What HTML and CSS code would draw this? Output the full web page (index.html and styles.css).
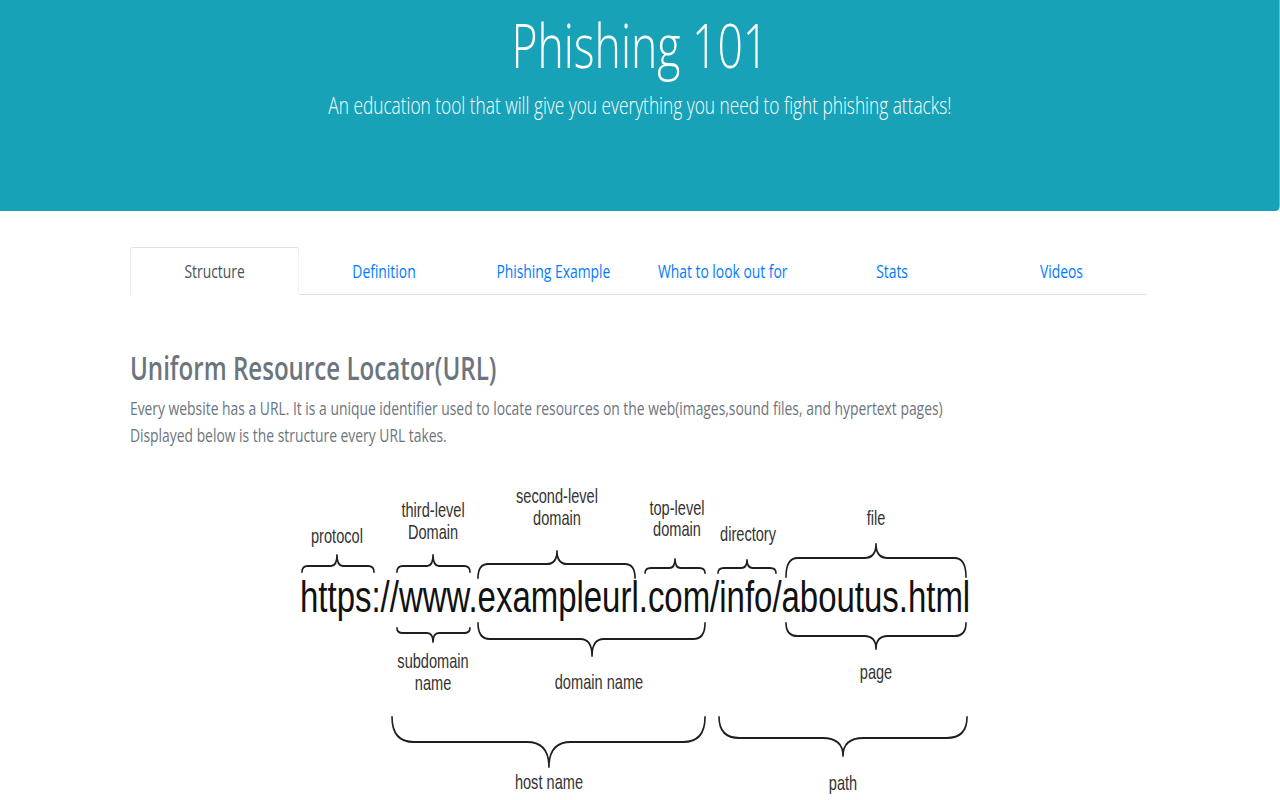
FILE: index.html
```html
<!DOCTYPE html>
<html lang="en">
<head>
<meta charset="utf-8">
<title>Phishing 101</title>
<link rel="stylesheet" href="styles.css">
</head>
<body>
<div class="frame">
<div class="page">
  <header class="hero">
    <h1 class="hero-title">Phishing 101</h1>
    <p class="hero-lead">An education tool that will give you everything you need to fight phishing attacks!</p>
  </header>
  <main class="container">
    <ul class="tabs">
      <li class="tab"><a class="tab-link active" href="#">Structure</a></li>
      <li class="tab"><a class="tab-link" href="#">Definition</a></li>
      <li class="tab"><a class="tab-link" href="#">Phishing Example</a></li>
      <li class="tab"><a class="tab-link" href="#">What to look out for</a></li>
      <li class="tab"><a class="tab-link" href="#">Stats</a></li>
      <li class="tab"><a class="tab-link" href="#">Videos</a></li>
    </ul>
    <section class="section">
      <h2 class="section-title">Uniform Resource Locator(URL)</h2>
      <p class="section-text">Every website has a URL. It is a unique identifier used to locate resources on the web(images,sound files, and hypertext pages)<br>Displayed below is the structure every URL takes.</p>
    </section>
  </main>
  <figure class="diagram">
    <svg class="diagram-svg" width="1753" height="330" viewBox="0 0 1753 330" xmlns="http://www.w3.org/2000/svg">
      <g class="braces">
        <path d="M413.7 101 Q413.7 95 421.7 95 L453.6 95 Q461.6 95 461.6 84 Q461.6 95 469.6 95 L504.3 95 Q512.3 95 512.3 101"/>
        <path d="M543.8 101 Q543.8 95 551.8 95 L585.2 95 Q593.2 95 593.2 84 Q593.2 95 601.2 95 L635.8 95 Q643.8 95 643.8 101"/>
        <path d="M654.8 107 Q654.8 93 668.8 93 L749 93 Q763 93 763 80 Q763 93 777 93 L855.9 93 Q869.9 93 869.9 107"/>
        <path d="M883.6 102 Q883.6 97 891.6 97 L916.7 97 Q924.7 97 924.7 88 Q924.7 97 932.7 97 L957.8 97 Q965.8 97 965.8 102"/>
        <path d="M983.6 102 Q983.6 97 991.6 97 L1015.3 97 Q1023.3 97 1023.3 89 Q1023.3 97 1031.3 97 L1055 97 Q1063 97 1063 102"/>
        <path d="M1076.7 106 Q1076.7 87 1092.7 87 L1184 87 Q1200 87 1200 73 Q1200 87 1216 87 L1307.3 87 Q1323.3 87 1323.3 106"/>
        <path d="M543.8 157 Q543.8 162 551.8 162 L585.2 162 Q593.2 162 593.2 171 Q593.2 162 601.2 162 L635.8 162 Q643.8 162 643.8 157"/>
        <path d="M654.8 152 Q654.8 168 670.8 168 L795 168 Q811 168 811 185 Q811 168 827 168 L949.8 168 Q965.8 168 965.8 152"/>
        <path d="M1076.7 152 Q1076.7 165 1092.7 165 L1184 165 Q1200 165 1200 178 Q1200 165 1216 165 L1307.3 165 Q1323.3 165 1323.3 152"/>
        <path d="M537 246 Q537 271 567 271 L722 271 Q752 271 752 296 Q752 271 782 271 L935.8 271 Q965.8 271 965.8 246"/>
        <path d="M985 246 Q985 267 1013 267 L1126.8 267 Q1154.8 267 1154.8 285 Q1154.8 267 1182.8 267 L1296.7 267 Q1324.7 267 1324.7 246"/>
      </g>
      <g class="labels">
        <text x="461.6" y="72">protocol</text>
        <text x="593.2" y="46">third-level</text>
        <text x="593.2" y="68">Domain</text>
        <text x="763" y="32">second-level</text>
        <text x="763" y="54">domain</text>
        <text x="927.4" y="44">top-level</text>
        <text x="927.4" y="65">domain</text>
        <text x="1024.7" y="70">directory</text>
        <text x="1200" y="54">file</text>
        <text x="593.2" y="197">subdomain</text>
        <text x="593.2" y="219">name</text>
        <text x="820.5" y="218">domain name</text>
        <text x="1200" y="208">page</text>
        <text x="752" y="318">host name</text>
        <text x="1154.8" y="319">path</text>
      </g>
      <text class="url" x="411" y="141" textLength="918" lengthAdjust="spacingAndGlyphs">https://www.exampleurl.com/info/aboutus.html</text>
    </svg>
  </figure>
</div>
</div>
</body>
</html>
```

FILE: styles.css
```css
html {
  overflow: hidden;
}

body {
  margin: 0;
  background: #ffffff;
  font-family: "Open Sans", "Noto Sans", sans-serif;
  color: #212529;
}

.frame {
  width: 1280px;
  height: 800px;
  overflow: hidden;
}

.page {
  width: 1753px;
  transform: scaleX(0.73);
  transform-origin: 0 0;
}

.hero {
  height: 211px;
  box-sizing: border-box;
  padding-top: 9px;
  background: #17a2b8;
  color: #ffffff;
  text-align: center;
  border-bottom-right-radius: 5px;
}

.hero-title {
  margin: 0;
  font-size: 61px;
  font-weight: 300;
  line-height: 72px;
}

.hero-lead {
  margin: 6px 0 0;
  font-size: 23.7px;
  font-weight: 300;
  line-height: 36px;
}

.container {
  width: 1392px;
  margin: 36px 0 0 178px;
}

.tabs {
  display: flex;
  margin: 0;
  padding: 0;
  list-style: none;
  border-bottom: 1px solid #dee2e6;
}

.tab {
  flex: 1 1 0;
  margin-bottom: -1px;
}

.tab-link {
  display: block;
  padding: 9px 16px;
  font-size: 19px;
  line-height: 28px;
  text-align: center;
  color: #007bff;
  text-decoration: none;
  border: 1px solid transparent;
  border-top-left-radius: 4px;
  border-top-right-radius: 4px;
}

.tab-link.active {
  color: #495057;
  background: #ffffff;
  border-color: #dee2e6 #dee2e6 #ffffff;
}

.section {
  padding-top: 54px;
}

.section-title {
  margin: 0 0 8px;
  font-size: 33px;
  font-weight: 600;
  line-height: 38px;
  color: #6c757d;
}

.section-text {
  margin: 0;
  font-size: 19px;
  line-height: 27px;
  color: #6c757d;
}

.diagram {
  margin: 22px 0 0;
}

.diagram-svg {
  display: block;
}

.braces path {
  fill: none;
  stroke: #1e1e1e;
  stroke-width: 2.2;
  stroke-linecap: round;
  stroke-linejoin: round;
}

.labels text {
  font-family: "Liberation Sans", Arial, sans-serif;
  font-size: 20px;
  fill: #333333;
  text-anchor: middle;
}

.url {
  font-family: "Liberation Sans", Arial, sans-serif;
  font-size: 45px;
  fill: #111111;
}
```
